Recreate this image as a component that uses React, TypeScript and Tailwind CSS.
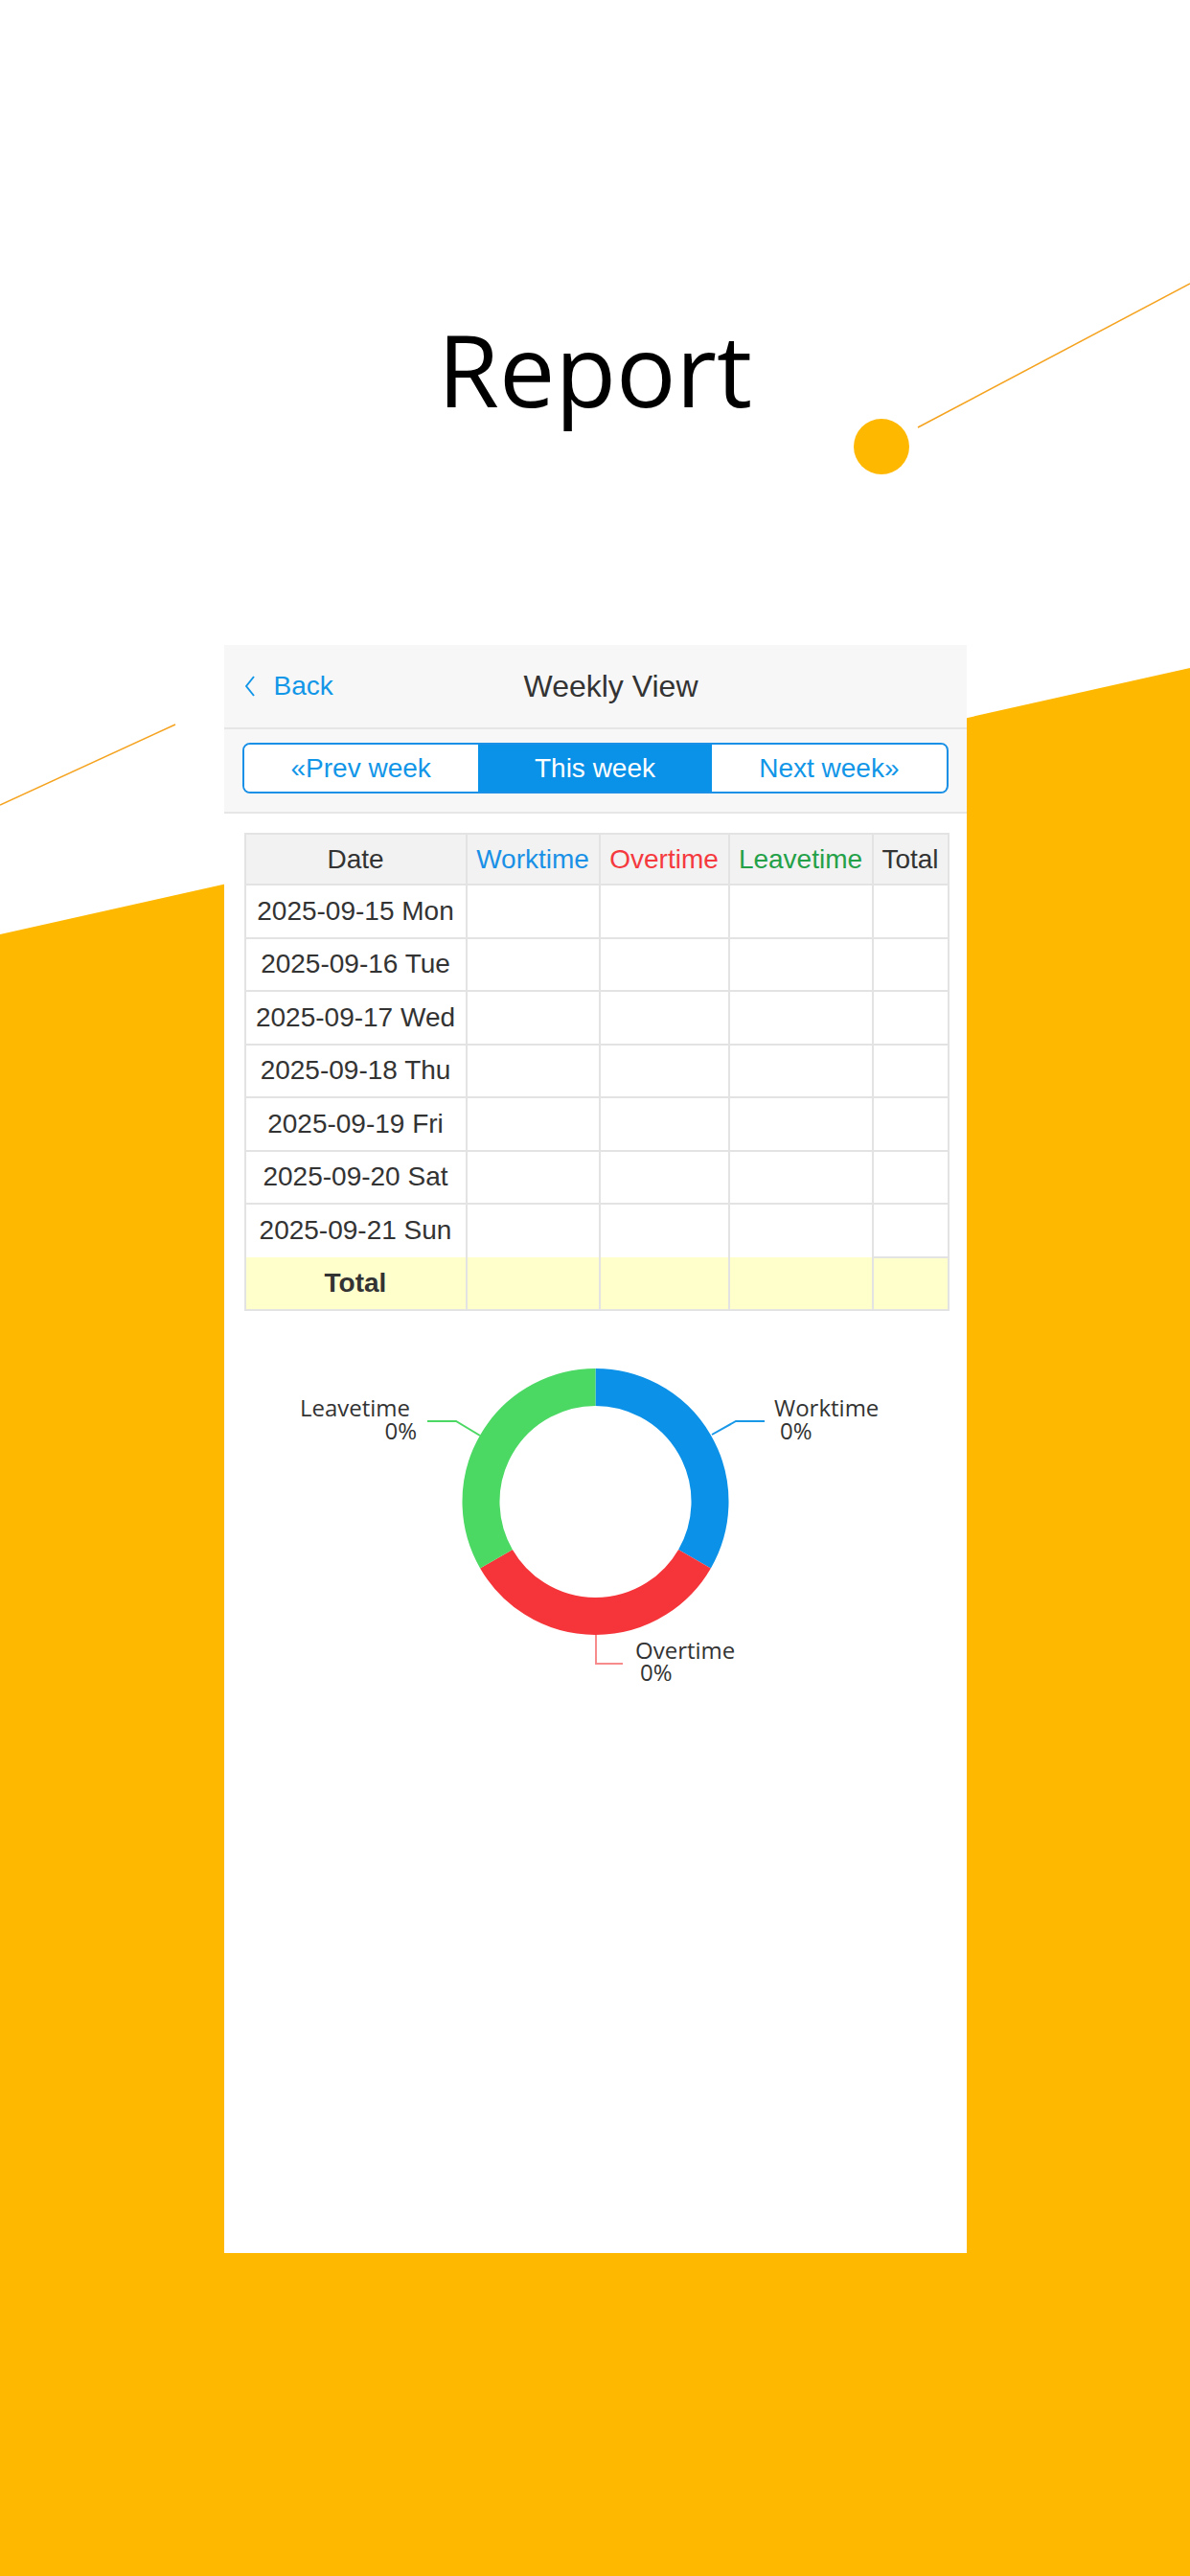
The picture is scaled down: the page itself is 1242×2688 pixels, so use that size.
import React from "react";

const days = [
  "2025-09-15 Mon",
  "2025-09-16 Tue",
  "2025-09-17 Wed",
  "2025-09-18 Thu",
  "2025-09-19 Fri",
  "2025-09-20 Sat",
  "2025-09-21 Sun",
];

function Donut() {
  // ring centre (387.5, 187), outer r 139, inner r 100
  const ring = "M 387.5 67.5 A 119.5 119.5 0 0 1 490.99 246.75";
  const ring2 = "M 490.99 246.75 A 119.5 119.5 0 0 1 284.01 246.75";
  const ring3 = "M 284.01 246.75 A 119.5 119.5 0 0 1 387.5 67.5";
  return (
    <svg width="775" height="420" className="mt-[12px] block" style={{ fontFamily: "'Open Sans', 'Noto Sans', sans-serif" }}>
      <path d={ring} stroke="#0b91e8" strokeWidth="39" fill="none" />
      <path d={ring2} stroke="#f5353a" strokeWidth="39" fill="none" />
      <path d={ring3} stroke="#4bd863" strokeWidth="39" fill="none" />

      <polyline points="509,117 534,103 564,103" stroke="#1a98e8" strokeWidth="2" fill="none" />
      <text x="574" y="98" fontSize="24" fill="#333">Worktime</text>
      <text x="580" y="122" fontSize="24" fill="#333">0%</text>

      <polyline points="267,118 242,103 212,103" stroke="#4bd863" strokeWidth="2" fill="none" />
      <text x="194" y="98" fontSize="24" fill="#333" textAnchor="end">Leavetime</text>
      <text x="201" y="122" fontSize="24" fill="#333" textAnchor="end">0%</text>

      <polyline points="388,326 388,356 416,356" stroke="#f78b8b" strokeWidth="2" fill="none" />
      <text x="429" y="351" fontSize="24" fill="#333">Overtime</text>
      <text x="434" y="374" fontSize="24" fill="#333">0%</text>
    </svg>
  );
}

export default function App() {
  return (
    <div className="relative w-[1242px] h-[2688px] overflow-hidden bg-white">
      <svg className="absolute inset-0" width="1242" height="2688">
        <polygon points="0,975 1242,697 1242,2688 0,2688" fill="#ffb800" />
        <line x1="958" y1="446" x2="1242" y2="296" stroke="#f5a31f" strokeWidth="1.5" />
        <line x1="0" y1="840" x2="183" y2="756" stroke="#f5a31f" strokeWidth="1.5" />
        <circle cx="920" cy="466" r="29" fill="#ffb800" />
      </svg>

      <div className="relative flex flex-col items-center">
        <h1 className="mt-[333px] text-[104px] leading-[104px] text-black font-['Open_Sans',sans-serif]">Report</h1>

        <div className="mt-[236px] w-[775px] h-[1678px] bg-white flex flex-col font-['Liberation_Sans',Arial,sans-serif]">
          <div className="h-[88px] bg-[#f7f7f7] border-b-2 border-[#e6e6e6] flex items-center">
            <div className="w-[313px] pl-[22px] flex items-center gap-[20px] text-[28px] text-[#1296e8]">
              <svg width="10" height="22" viewBox="0 0 10 22">
                <polyline points="9,1 1,11 9,21" fill="none" stroke="#1296e8" strokeWidth="2" />
              </svg>
              <span>Back</span>
            </div>
            <div className="text-[32px] text-[#333]">Weekly View</div>
          </div>

          <div className="bg-[#f7f7f7] border-b-2 border-[#e6e6e6] pt-[14px] pb-[19px] px-[19px]">
            <div className="h-[53px] grid grid-cols-3 border-2 border-[#1a91e6] rounded-[8px] overflow-hidden text-[28px]">
              <div className="bg-white text-[#1296e8] flex items-center justify-center">«Prev week</div>
              <div className="bg-[#0a91e8] text-white flex items-center justify-center">This week</div>
              <div className="bg-white text-[#1296e8] flex items-center justify-center">Next week»</div>
            </div>
          </div>

          <div className="pt-[20px] pl-[21px] pr-[20px]">
            <table className="w-[734px] table-fixed border-collapse text-[28px] text-[#333]">
              <colgroup>
                <col className="w-[231px]" />
                <col className="w-[139px]" />
                <col className="w-[135px]" />
                <col className="w-[150px]" />
                <col className="w-[79px]" />
              </colgroup>
              <thead>
                <tr className="h-[53px] bg-[#f2f2f2]">
                  <th className="border-2 border-[#e3e3e3] font-normal">Date</th>
                  <th className="border-2 border-[#e3e3e3] font-normal text-[#1a91e6]">Worktime</th>
                  <th className="border-2 border-[#e3e3e3] font-normal text-[#f53a3f]">Overtime</th>
                  <th className="border-2 border-[#e3e3e3] font-normal text-[#24a148]">Leavetime</th>
                  <th className="border-2 border-[#e3e3e3] font-normal">Total</th>
                </tr>
              </thead>
              <tbody>
                {days.map((d, i) => {
                  const last = i === days.length - 1;
                  return (
                    <tr key={d} className="h-[55.5px]">
                      <td className={last ? "border-2 border-b-0 border-[#e3e3e3] text-center" : "border-2 border-[#e3e3e3] text-center"}>{d}</td>
                      <td className={last ? "border-2 border-b-0 border-[#e3e3e3]" : "border-2 border-[#e3e3e3]"}></td>
                      <td className={last ? "border-2 border-b-0 border-[#e3e3e3]" : "border-2 border-[#e3e3e3]"}></td>
                      <td className={last ? "border-2 border-b-0 border-[#e3e3e3]" : "border-2 border-[#e3e3e3]"}></td>
                      <td className="border-2 border-[#e3e3e3]"></td>
                    </tr>
                  );
                })}
                <tr className="h-[55.5px] bg-[#ffffcc]">
                  <td className="border-2 border-t-0 border-[#e3e3e3] text-center font-bold">Total</td>
                  <td className="border-2 border-t-0 border-[#e3e3e3]"></td>
                  <td className="border-2 border-t-0 border-[#e3e3e3]"></td>
                  <td className="border-2 border-t-0 border-[#e3e3e3]"></td>
                  <td className="border-2 border-[#e3e3e3]"></td>
                </tr>
              </tbody>
            </table>
          </div>

          <Donut />
        </div>
      </div>
    </div>
  );
}
